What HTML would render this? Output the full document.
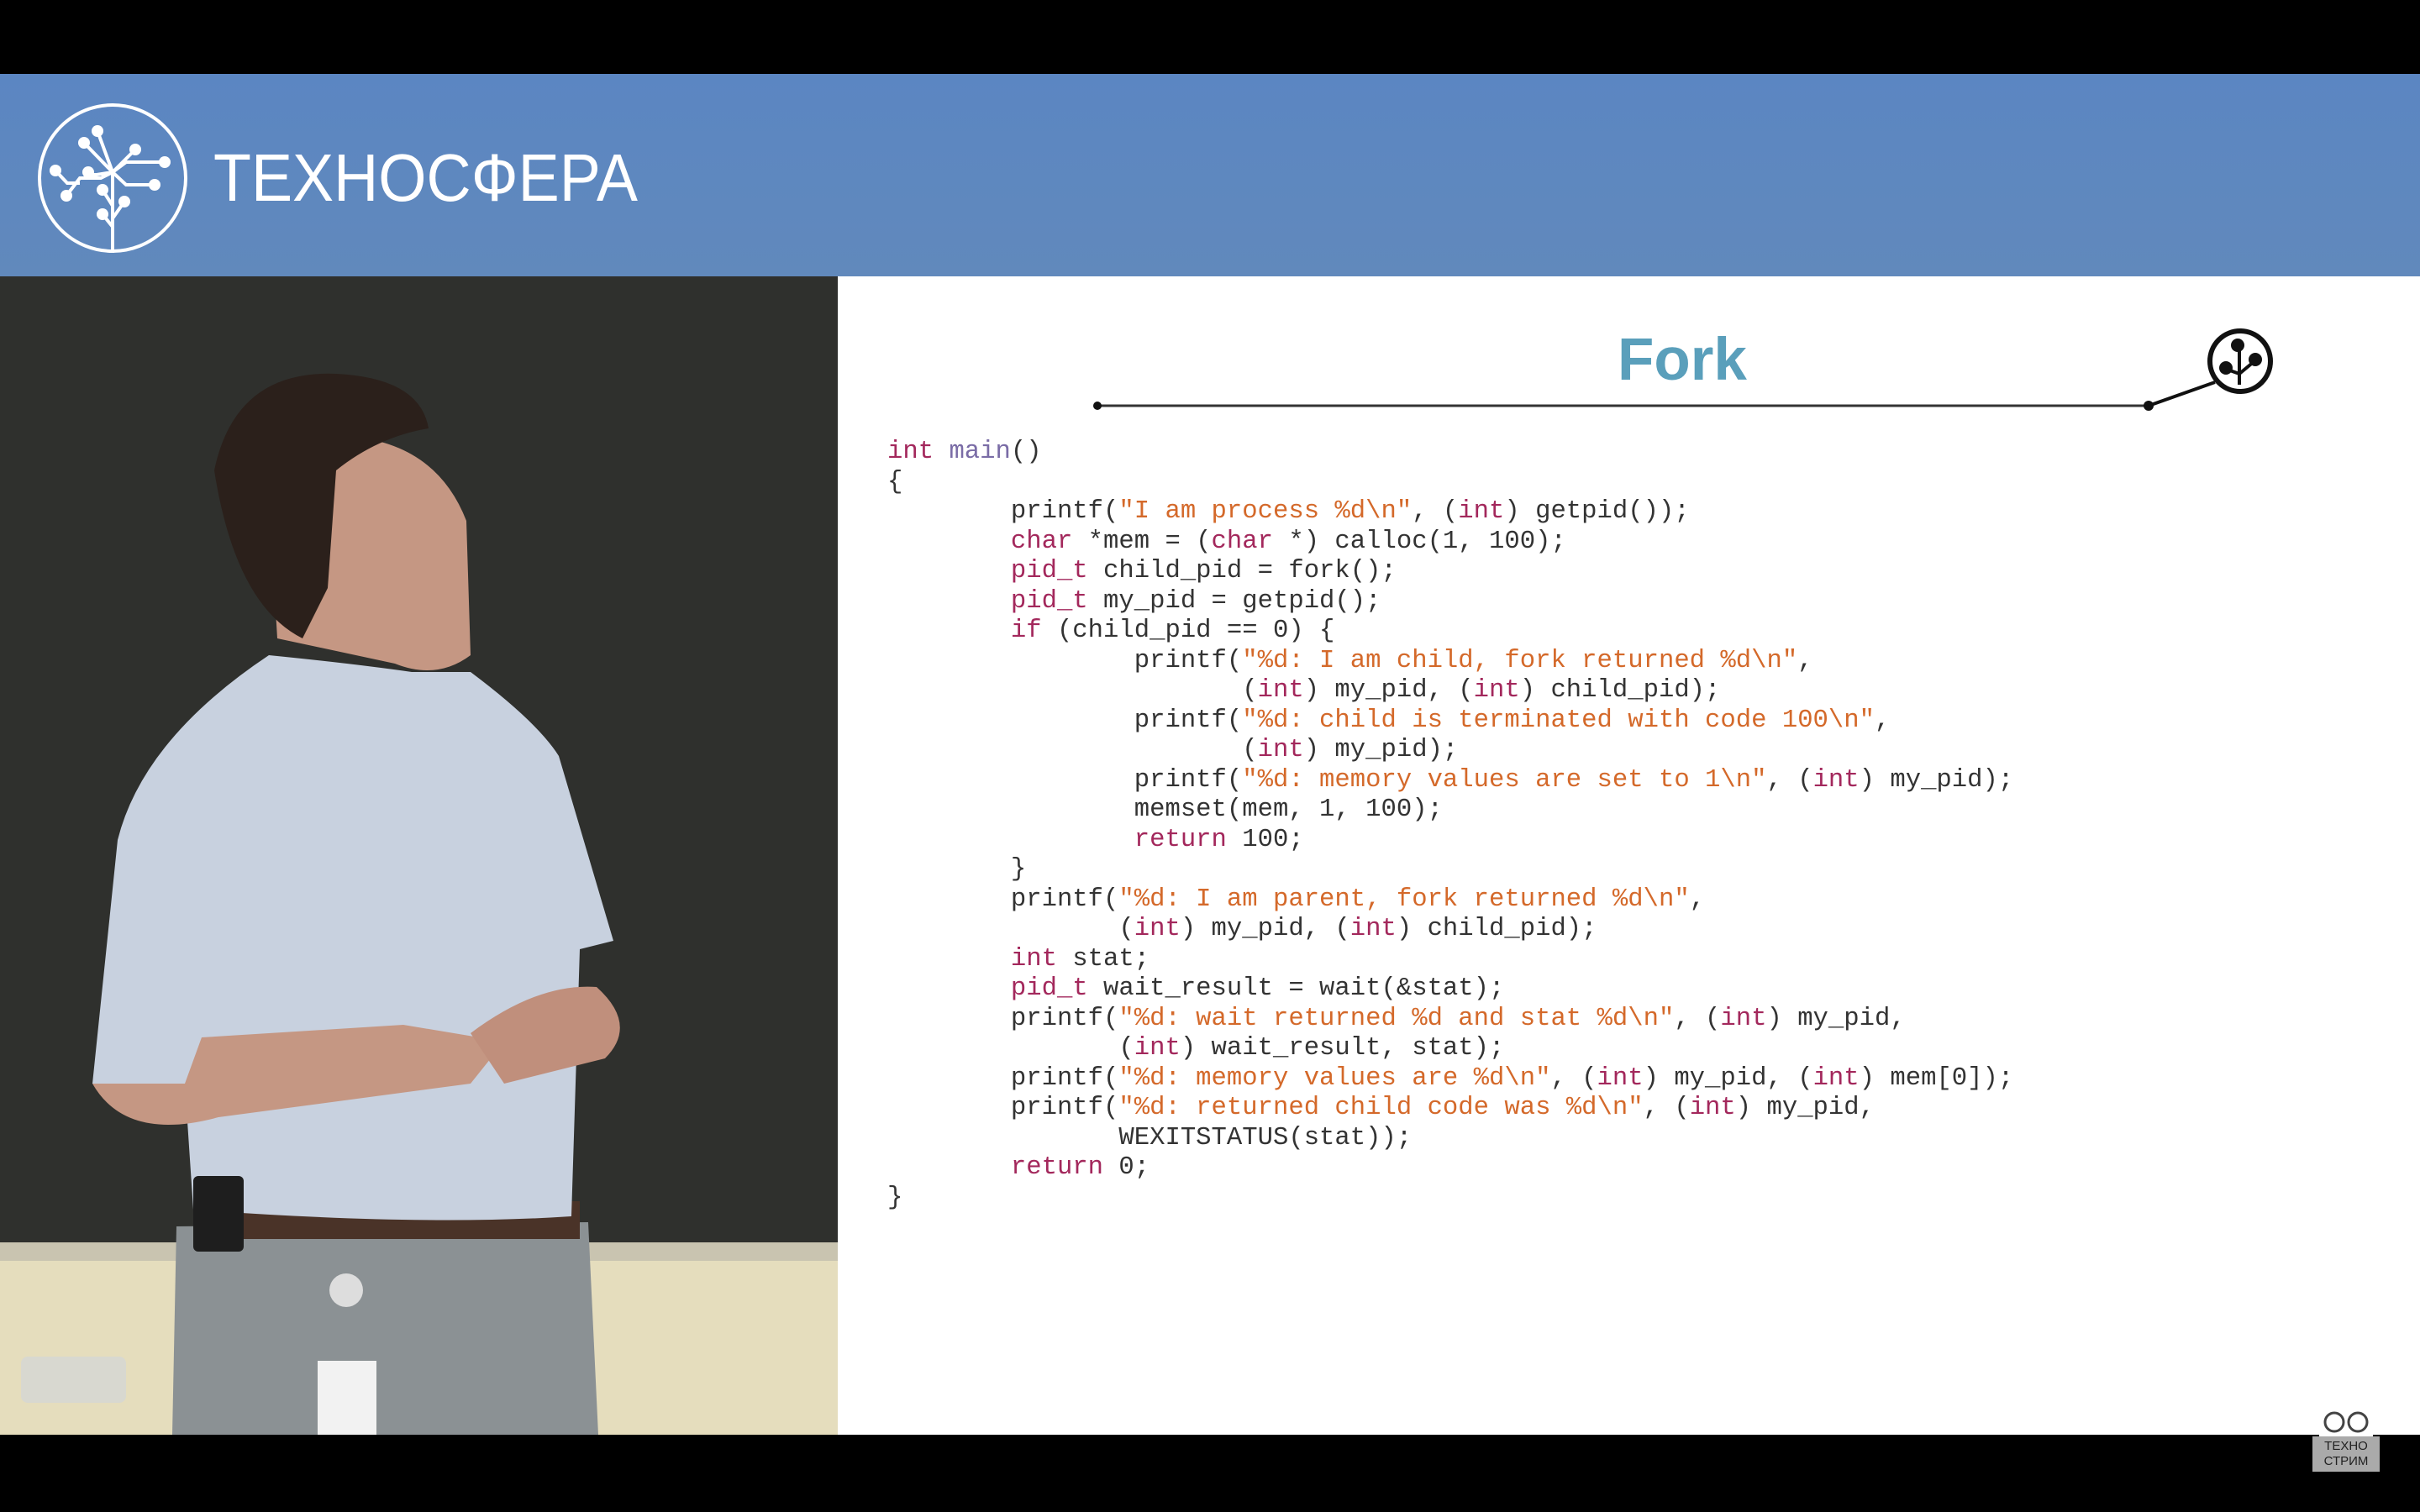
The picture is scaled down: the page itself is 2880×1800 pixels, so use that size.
<!DOCTYPE html>
<html><head><meta charset="utf-8"><style>
html,body{margin:0;padding:0}
body{width:2880px;height:1800px;position:relative;background:#000;overflow:hidden;font-family:"Liberation Sans",sans-serif}
.hdr{position:absolute;left:0;top:88px;width:2880px;height:241px;background:linear-gradient(#5b86c2,#6189bc)}
.brand{position:absolute;left:254px;top:74px;font-size:80px;color:#fff;letter-spacing:0px;line-height:100px;font-family:"Liberation Sans",sans-serif;transform:scaleX(0.92);transform-origin:left top;white-space:nowrap}
.video{position:absolute;left:0;top:329px;width:997px;height:1379px;background:#2f302d;overflow:hidden}
.slide{position:absolute;left:997px;top:329px;width:1883px;height:1379px;background:#fff}
.title{position:absolute;left:1925px;top:384px;font-size:71px;font-weight:bold;color:#5a9fbb;line-height:90px}
pre{position:absolute;left:1056px;top:521px;margin:0;font-family:"Liberation Mono",monospace;font-size:30.6px;line-height:35.5px;color:#333}
.k{color:#a3285c}.f{color:#7a6ca6}.s{color:#d4692a}
.ts{position:absolute;left:2752px;top:1710px;width:80px;height:42px;background:#aaa;color:#222;font-size:15px;line-height:18px;text-align:center;padding-top:3px;box-sizing:border-box}
</style></head><body>
<div class="hdr">
<svg width="260" height="241" style="position:absolute;left:0;top:0" viewBox="0 88 260 241">
<g stroke="#fff" fill="none" stroke-width="4">
<circle cx="134" cy="212" r="87"/>
<path d="M134 301V205L116 156M134 205L100 170M134 205L161 178M134 205L150 193H196M134 205L150 220H184M134 205L115 208H105M134 205L120 212H95L79 233M122 226L134 245M148 240L134 260M122 255L134 270M66 203L80 218H95"/>
</g>
<g fill="#fff">
<circle cx="116" cy="156" r="7"/><circle cx="100" cy="170" r="7"/><circle cx="161" cy="178" r="7"/><circle cx="196" cy="193" r="7"/><circle cx="66" cy="203" r="7"/><circle cx="105" cy="205" r="7"/><circle cx="184" cy="220" r="7"/><circle cx="79" cy="233" r="7"/><circle cx="122" cy="226" r="7"/><circle cx="148" cy="240" r="7"/><circle cx="122" cy="255" r="7"/>
</g></svg>
<div class="brand">ТЕХНОСФЕРА</div>
</div>
<div class="video">
<svg width="997" height="1379" viewBox="0 329 997 1379">
<rect x="0" y="1479" width="997" height="22" fill="#c9c4b0"/>
<rect x="0" y="1501" width="997" height="207" fill="#e5ddbd"/>
<rect x="25" y="1615" width="125" height="55" rx="8" fill="#d8d8d0"/>
<path d="M210 1460L700 1455L712 1708H205Z" fill="#8b9194"/>
<path d="M230 1430H690V1475H230Z" fill="#4a3328"/>
<path d="M320 590Q330 520 420 520Q520 530 555 620L560 780Q520 810 470 790L330 760Z" fill="#c59783"/>
<path d="M255 560Q280 440 400 445Q500 450 510 510Q450 520 400 560L390 700L360 760Q280 720 255 560Z" fill="#2b201b"/>
<path d="M320 780Q420 790 490 800L560 800Q640 860 665 900L730 1120L690 1130L680 1448Q500 1460 230 1440L220 1290L110 1290L140 1000Q170 880 320 780Z" fill="#c8d1df"/>
<path d="M110 1290Q150 1360 260 1330L560 1290L600 1240L480 1220L240 1235L220 1290Z" fill="#c59783"/>
<path d="M560 1230Q640 1170 710 1175Q760 1220 720 1260L600 1290Z" fill="#c08f7c"/>
<rect x="230" y="1400" width="60" height="90" rx="6" fill="#1e1e1e"/>
<rect x="378" y="1620" width="70" height="90" fill="#f2f2f2"/>
<circle cx="412" cy="1536" r="20" fill="#ddd"/>
</svg>
</div>
<div class="slide"></div>
<div class="title">Fork</div>
<svg width="2880" height="1800" style="position:absolute;left:0;top:0;pointer-events:none">
<line x1="1306" y1="483" x2="2557" y2="483" stroke="#333" stroke-width="3"/>
<circle cx="1306" cy="483" r="5" fill="#111"/>
<circle cx="2557" cy="483" r="6" fill="#111"/>
<line x1="2557" y1="483" x2="2636" y2="455" stroke="#111" stroke-width="4"/>
<circle cx="2666" cy="430" r="36" fill="#fff" stroke="#111" stroke-width="6"/>
<path d="M2665 458V412M2665 445L2651 440M2665 445L2683 430" stroke="#111" stroke-width="4" fill="none"/>
<circle cx="2663" cy="411" r="8" fill="#111"/><circle cx="2649" cy="438" r="8" fill="#111"/><circle cx="2684" cy="428" r="8" fill="#111"/>
<rect x="2760" y="1680" width="64" height="30" fill="#fff"/>
<circle cx="2778" cy="1693" r="11" fill="none" stroke="#444" stroke-width="3"/>
<circle cx="2806" cy="1693" r="11" fill="none" stroke="#444" stroke-width="3"/>
</svg>
<pre><span class="k">int</span> <span class="f">main</span>()
{
        printf(<span class="s">"I am process %d\n"</span>, (<span class="k">int</span>) getpid());
        <span class="k">char</span> *mem = (<span class="k">char</span> *) calloc(1, 100);
        <span class="k">pid_t</span> child_pid = fork();
        <span class="k">pid_t</span> my_pid = getpid();
        <span class="k">if</span> (child_pid == 0) {
                printf(<span class="s">"%d: I am child, fork returned %d\n"</span>,
                       (<span class="k">int</span>) my_pid, (<span class="k">int</span>) child_pid);
                printf(<span class="s">"%d: child is terminated with code 100\n"</span>,
                       (<span class="k">int</span>) my_pid);
                printf(<span class="s">"%d: memory values are set to 1\n"</span>, (<span class="k">int</span>) my_pid);
                memset(mem, 1, 100);
                <span class="k">return</span> 100;
        }
        printf(<span class="s">"%d: I am parent, fork returned %d\n"</span>,
               (<span class="k">int</span>) my_pid, (<span class="k">int</span>) child_pid);
        <span class="k">int</span> stat;
        <span class="k">pid_t</span> wait_result = wait(&amp;stat);
        printf(<span class="s">"%d: wait returned %d and stat %d\n"</span>, (<span class="k">int</span>) my_pid,
               (<span class="k">int</span>) wait_result, stat);
        printf(<span class="s">"%d: memory values are %d\n"</span>, (<span class="k">int</span>) my_pid, (<span class="k">int</span>) mem[0]);
        printf(<span class="s">"%d: returned child code was %d\n"</span>, (<span class="k">int</span>) my_pid,
               WEXITSTATUS(stat));
        <span class="k">return</span> 0;
}</pre>
<div class="ts">ТЕХНО<br>СТРИМ</div>
</body></html>
